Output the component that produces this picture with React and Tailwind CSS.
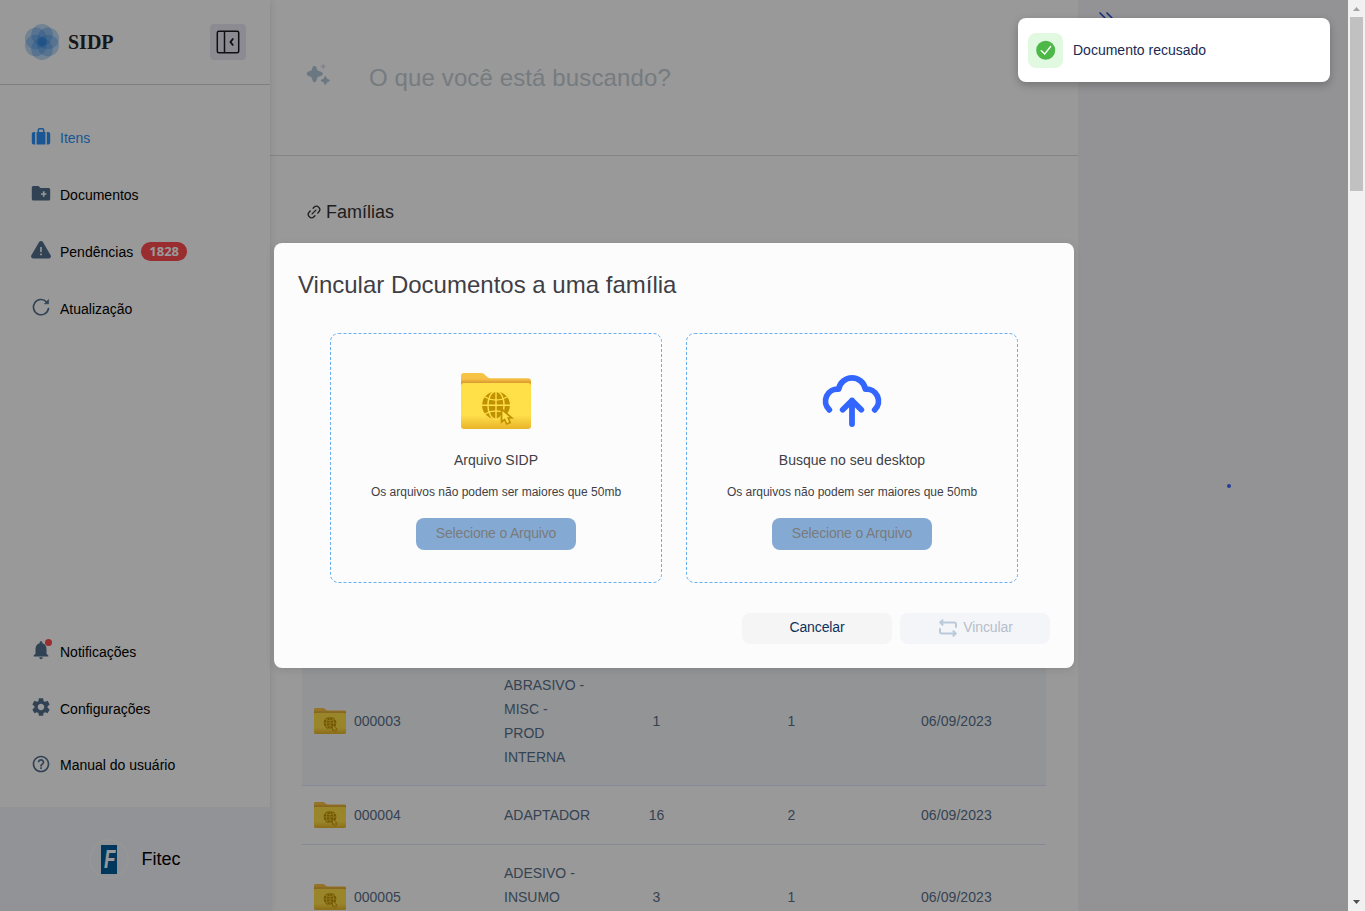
import { MdNotifications, MdSettings, MdHelpOutline } from "react-icons/md";
import { ChevronsRight, Link2 } from "lucide-react";

const petals = [0, 60, 120, 180, 240, 300];

function Logo() {
  return (
    <svg viewBox="0 0 36 36" className="h-9 w-9">
      {petals.map((a) => (
        <circle key={a} cx="18" cy="10.800" r="10.800" fill="#2a86e6" fillOpacity="0.3" transform={`rotate(${a} 18 18)`} />
      ))}
      <circle cx="18" cy="18" r="5" fill="#2a82dc" fillOpacity="0.4" />
    </svg>
  );
}

function PanelIcon() {
  return (
    <svg viewBox="0 0 24 24" className="h-6 w-6" fill="none" stroke="#1c1c20" strokeWidth="1.500">
      <rect x="1.300" y="1.300" width="21.400" height="21.400" rx="1.500" />
      <path d="M8.500 1.500v21" />
      <path d="M17.200 8.500 14.500 12l2.700 3.500" strokeWidth="1.900" />
    </svg>
  );
}

function Suitcase() {
  return (
    <svg viewBox="0 0 20 20" className="h-5 w-5" fill="#2a90f5">
      <path fillRule="evenodd" d="M5.600 6h1V3.700A2 2 0 0 1 8.600 1.900h2.800a2 2 0 0 1 2 1.800V6h1v12.400H5.600zM8.100 6h3.800V4a.6.6 0 0 0-.6-.6H8.700a.6.6 0 0 0-.6.6z" />
      <path d="M4.200 6v12.400H2.700A2 2 0 0 1 .8 16.500V7.800A2 2 0 0 1 2.700 6zM15.800 6v12.400h1.500a2 2 0 0 0 1.900-1.900V7.800A2 2 0 0 0 17.300 6z" />
    </svg>
  );
}

function FolderPlus() {
  return (
    <svg viewBox="0 0 20 20" className="h-5 w-5">
      <path d="M.8 4.400a1.500 1.500 0 0 1 1.500-1.500h5.200l2 2h8.200a1.500 1.500 0 0 1 1.500 1.500v9.600a1.500 1.500 0 0 1-1.500 1.500H2.300A1.500 1.500 0 0 1 .8 16z" fill="#516f8b" />
      <path d="M12.700 8.300v5.400M10 11h5.400" stroke="#fff" strokeWidth="1.600" />
    </svg>
  );
}

function Warning() {
  return (
    <svg viewBox="0 0 20 20" className="h-5 w-5">
      <path d="M8.100 2.100a2.200 2.200 0 0 1 3.800 0l7.700 13.200a2.200 2.200 0 0 1-1.900 3.300H2.300a2.200 2.200 0 0 1-1.900-3.300z" fill="#516f8b" />
      <path d="M10 7v5M10 13.600v1.700" stroke="#fff" strokeWidth="1.600" />
    </svg>
  );
}

function Reload() {
  return (
    <svg viewBox="0 0 20 20" className="h-5 w-5" fill="none" stroke="#516f8b" strokeWidth="1.600" strokeLinecap="round" strokeLinejoin="round">
      <path d="M17.500 11.500A7.600 7.600 0 1 1 15.600 5" />
      <path d="M17.600 2.800v4h-4z" fill="#516f8b" strokeWidth="0.600" />
    </svg>
  );
}

function Sparkles() {
  return (
    <svg viewBox="0 0 24 22" className="h-[22px] w-6">
      <path d="M8.500 2c1.700 0 2 1 2.500 3.200.3 1 1 1.500 2 1.800 2.200.5 3.800 1 3.800 2.800s-1.600 2.200-3.800 2.700c-1 .3-1.700 1-2 2-.5 2.200-.8 3.800-2.500 3.800s-2-1.600-2.500-3.800c-.3-1-1-1.700-2-2-2.200-.5-3.300-1-3.300-2.700S1.800 7.500 4 7c1-.3 1.700-.8 2-1.800C6.500 3 6.800 2 8.500 2z" fill="#b3c8d8" />
      <path d="M19.300 12.800l1.200 2.500 2.500 1.200-2.500 1.200-1.200 2.500-1.200-2.500-2.500-1.200 2.500-1.200z" fill="#b3c8d8" stroke="#b3c8d8" strokeWidth="1.500" strokeLinejoin="round" />
      <path d="M17.300 0l.8 1.800 1.700.7-1.700.8-.8 1.700-.8-1.700-1.700-.8 1.700-.7z" fill="#dcdcea" stroke="#dcdcea" strokeWidth=".6" />
    </svg>
  );
}

function Folder({ className }) {
  return (
    <svg viewBox="0 0 69 56" className={className} preserveAspectRatio="none">
      <defs>
        <linearGradient id="front" x1="0" y1="0" x2="0" y2="1">
          <stop offset="0" stopColor="#ffe048" />
          <stop offset="0.7" stopColor="#ffdf4a" />
          <stop offset="1" stopColor="#e9b429" />
        </linearGradient>
        <linearGradient id="back" x1="0" y1="0" x2="0" y2="1">
          <stop offset="0" stopColor="#f7c545" />
          <stop offset="0.12" stopColor="#f6c044" />
          <stop offset="0.2" stopColor="#d99a30" />
        </linearGradient>
      </defs>
      <path d="M0 3a3 3 0 0 1 3-3h17c4 0 5 5.300 9 5.300h37a3 3 0 0 1 3 3V50H0z" fill="url(#back)" />
      <path d="M0 13a3 3 0 0 1 3-3h63a3 3 0 0 1 3 3v40a3 3 0 0 1-3 3H3a3 3 0 0 1-3-3z" fill="url(#front)" />
      <circle cx="34.500" cy="32.300" r="13.700" fill="#c09100" />
      <g fill="none" stroke="#ffdf4a" strokeWidth="1.400">
        <path d="M34.500 18v29M20.500 32.300h28M23.500 24c7 4 15 4 22 0M23.500 41c7-4 15-4 22 0" />
        <ellipse cx="34.500" cy="32.300" rx="8" ry="14" />
      </g>
      <path d="M40 36v13l3-2.500 2 4.500 3.500-1.500-2-4.500h3.500z" fill="#ffe048" stroke="#c09100" strokeWidth="1.700" />
    </svg>
  );
}

function CloudUpload() {
  return (
    <svg viewBox="0 0 64 60" className="h-[60px] w-16" fill="none" stroke="#3366ff" strokeWidth="5.800" strokeLinecap="round" strokeLinejoin="round">
      <path d="M9.300 39.800A12 12 0 0 1 18.700 19.100A13.500 13.500 0 0 1 45.300 19.100A12 12 0 0 1 54.700 39.800" />
      <path d="M32 54V30.500M22.700 39.700 32 30.500l9.300 9.200" />
    </svg>
  );
}

function Swap() {
  return (
    <svg viewBox="0 0 18 18" className="h-[18px] w-[18px]" fill="none" stroke="#b9cbdb" strokeWidth="2" strokeLinecap="round" strokeLinejoin="round">
      <path d="M1.500 3.500h13.500a2 2 0 0 1 2 2V8M3.500 1.200 1.300 3.500l2.200 2.300M16.500 14.500H3a2 2 0 0 1-2-2V10M14.500 12.200l2.200 2.300-2.200 2.300" />
    </svg>
  );
}

function NavItem({ icon, label, active, children }) {
  return (
    <div className="flex h-[57px] items-center pl-[31px] text-sm">
      <span className="relative -top-[2px] mr-[9px] flex h-5 w-5 items-center justify-center text-[#516f8b]">{icon}</span>
      <span className={active ? "text-[#2a90f5]" : "text-black"}>{label}</span>
      {children}
    </div>
  );
}

const rows = [
  { code: "000003", name: ["ABRASIVO -", "MISC -", "PROD", "INTERNA"], a: 1, b: 1, style: "h-[129px] bg-[#f4f7fa]" },
  { code: "000004", name: ["ADAPTADOR"], a: 16, b: 2, style: "h-[59px]" },
  { code: "000005", name: ["ADESIVO -", "INSUMO", "\u00a0"], a: 3, b: 1, style: "h-[105px]" },
];

function UploadCard({ icon, title }) {
  return (
    <div className="relative flex h-[250px] w-[332px] flex-col items-center rounded-lg pt-[37px]">
      <svg className="absolute inset-0 h-full w-full" fill="none">
        <rect x="0.5" y="0.5" width="331" height="249" rx="8" stroke="#66aff0" strokeDasharray="3 2" />
      </svg>
      <div className="flex h-[60px] items-center">{icon}</div>
      <div className="mt-5 text-sm leading-5">{title}</div>
      <div className="mt-3 text-xs leading-5">Os arquivos não podem ser maiores que 50mb</div>
      <button className="mt-4 h-8 w-40 rounded-lg bg-[#84aad4] pb-[2px] text-sm tracking-[-0.18px] text-[#7b7b7b]">Selecione o Arquivo</button>
    </div>
  );
}

export default function App() {
  return (
    <div className="relative flex h-[911px] w-[1365px] overflow-hidden bg-white font-['Liberation_Sans',Arial,sans-serif]">
      <aside className="z-0 flex w-[270px] shrink-0 flex-col bg-white shadow-[0_0_8px_rgba(0,0,0,0.12)]">
        <header className="flex h-[85px] items-center border-b border-[#d4d4d4] pr-6 pl-6">
          <Logo />
          <span className="ml-2 font-['Liberation_Serif',serif] text-xl font-bold text-[#27272a]">SIDP</span>
          <button className="ml-auto flex h-9 w-9 items-center justify-center rounded bg-[#e8e8f2]"><PanelIcon /></button>
        </header>
        <nav className="mt-6">
          <NavItem icon={<Suitcase />} label="Itens" active />
          <NavItem icon={<FolderPlus />} label="Documentos" />
          <NavItem icon={<Warning />} label="Pendências">
            <span className="ml-2 flex h-[19px] w-[46px] items-center justify-center rounded-full bg-[#ff4b4f] font-['Open_Sans',sans-serif] text-[13px] font-bold text-white">1828</span>
          </NavItem>
          <NavItem icon={<Reload />} label="Atualização" />
        </nav>
        <nav className="mt-auto mb-[13px]">
          <NavItem
            icon={<><MdNotifications size={22} className="shrink-0" /><span className="absolute -top-[1px] left-[14px] h-[7px] w-[7px] rounded-full bg-[#ff4b4f]" /></>}
            label="Notificações"
          />
          <NavItem icon={<MdSettings size={22} className="shrink-0" />} label="Configurações" />
          <div className="-mt-px mb-px"><NavItem icon={<MdHelpOutline size={20} className="relative top-px" />} label="Manual do usuário" /></div>
        </nav>
        <footer className="flex h-[104px] items-center justify-center bg-[#f3f5fa]">
          <span className="flex h-10 w-10 items-center justify-center rounded-full border-2 border-[#fafafa]">
            <span className="flex h-[29px] w-4 items-center justify-center bg-[#005c9c] text-[25px] leading-none font-bold text-white italic"><span className="scale-x-75">F</span></span>
          </span>
          <span className="ml-3 text-lg text-black">Fitec</span>
        </footer>
      </aside>

      <main className="flex w-[808px] shrink-0 flex-col">
        <div className="flex h-[156px] shrink-0 border-b border-[#dcdcdc] pt-[64px] pl-9">
          <Sparkles />
          <span className="ml-[39px] text-2xl leading-7 tracking-[0.12px] text-[#c5ced6]">O que você está buscando?</span>
        </div>
        <h2 className="mt-11 flex items-center gap-1 pl-9 text-lg leading-6 text-[#333]">
          <Link2 size={16} strokeWidth={2} className="-rotate-45" />
          Famílias
        </h2>
        <div className="mt-[433px] mr-8 ml-8">
          {rows.map((r) => (
            <div key={r.code} className={`grid grid-cols-[202px_85px_135px_135px_1fr] items-center border-b border-[#dfe5fa] text-sm leading-6 text-[#5a708a] ${r.style}`}>
              <div className="flex items-center gap-2 pl-3"><Folder className="h-[26px] w-8" />{r.code}</div>
              <div>{r.name.map((n) => <div key={n} className="whitespace-nowrap">{n}</div>)}</div>
              <div className="text-center">{r.a}</div>
              <div className="text-center">{r.b}</div>
              <div className="pl-[62px] tracking-[0.07px]">06/09/2023</div>
            </div>
          ))}
        </div>
      </main>

      <section className="relative w-[270px] shrink-0 bg-[#f6f6f9]">
        <ChevronsRight size={24} strokeWidth={1.700} className="absolute top-1.5 left-4 text-[#2850d8]" />
        <span className="absolute top-[484px] left-[149px] h-1 w-1 rounded-full bg-[#3d66ff]" />
      </section>

      <div className="flex w-[17px] shrink-0 flex-col items-center justify-between bg-[#f1f1f1]">
        <div className="flex flex-col items-center">
          <svg width="17" height="17"><path d="M5 11l3.500-4 3.500 4z" fill="#a3a3a3" /></svg>
          <div className="h-[174px] w-[13px] bg-[#c1c1c1]" />
        </div>
        <svg width="17" height="17"><path d="M5 6l3.500 4 3.500-4z" fill="#505050" /></svg>
      </div>

      <div className="absolute top-0 left-0 h-full w-[1348px] bg-black/40" />

      <div className="absolute top-[243px] left-[274px] flex h-[425px] w-[800px] flex-col rounded-lg bg-[#fcfcfc] px-6 pt-6 pb-6 text-[#3f3f46] shadow-[0_2px_8px_rgba(0,0,0,0.1)]">
        <h1 className="text-2xl leading-9">Vincular Documentos a uma família</h1>
        <div className="mt-[30px] flex justify-center gap-6">
          <UploadCard icon={<Folder className="mt-0.5 h-[56px] w-[70px]" />} title="Arquivo SIDP" />
          <UploadCard icon={<CloudUpload />} title="Busque no seu desktop" />
        </div>
        <div className="mt-auto flex justify-end gap-2 text-sm tracking-[-0.1px]">
          <button className="h-[31px] w-[150px] rounded-lg bg-[#f5f5f5] pb-[3px] text-[#0f315c]">Cancelar</button>
          <button className="flex h-[31px] w-[150px] items-center justify-center gap-1.5 rounded-lg bg-[#f4f5f8] pb-px pl-0.5 text-[#b5bfca]">
            <Swap /><span className="pb-[2px]">Vincular</span>
          </button>
        </div>
      </div>

      <div className="absolute top-[18px] left-[1018px] flex h-16 w-[312px] items-center rounded-lg bg-white pl-2.5 shadow-[0_3px_8px_rgba(0,0,0,0.24)]">
        <span className="flex h-[35px] w-[35px] items-center justify-center rounded-lg bg-[#e1f9e1]">
          <svg viewBox="0 0 20 20" className="h-5 w-5"><circle cx="9.700" cy="10.200" r="9.500" fill="#4db748" /><path d="M4.800 10.200 8.700 14 15 6" fill="none" stroke="#fff" strokeWidth="1.300" /></svg>
        </span>
        <span className="ml-2.5 text-sm text-[#172b54]">Documento recusado</span>
      </div>
    </div>
  );
}
